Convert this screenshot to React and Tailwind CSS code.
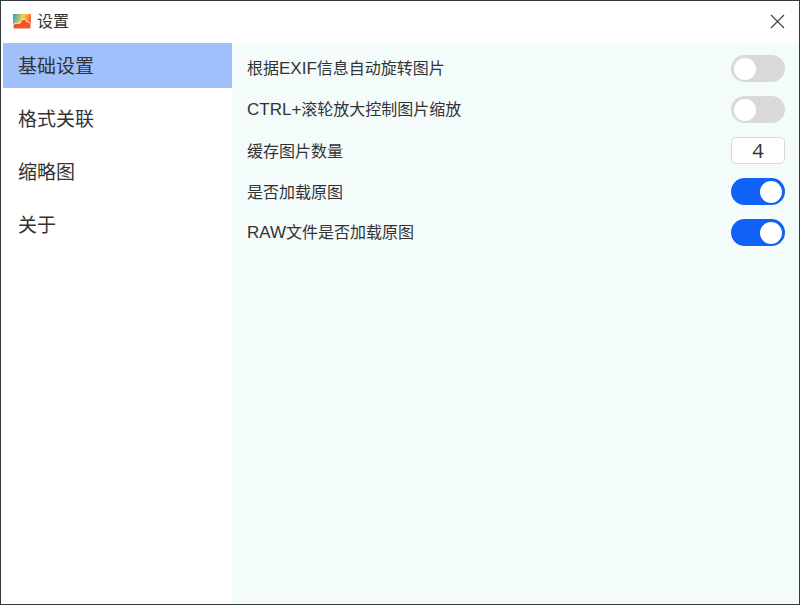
import React from 'react';

const menu = ['基础设置', '格式关联', '缩略图', '关于'];

const Latin = ({ children }) => (
    <span className="text-[17px] font-['Liberation_Sans',sans-serif]">{children}</span>
);

const Toggle = ({ on }) => (
    <div className={on
        ? 'w-[54px] h-[27px] rounded-full bg-[#0f62f5] flex items-center justify-end pr-[3px]'
        : 'w-[54px] h-[27px] rounded-full bg-[#d9d9d9] flex items-center justify-start pl-[3px]'}>
        <div className="w-[22px] h-[22px] rounded-full bg-white"></div>
    </div>
);

const Row = ({ label, children }) => (
    <div className="h-[41px] flex items-center justify-between">
        <span className="text-[16px] text-[#333333]">{label}</span>
        {children}
    </div>
);

const App = () => {
    return (
        <div className="w-[800px] h-[605px] bg-[#33393b] p-[1px] overflow-hidden font-['Open_Sans','Noto_Sans_CJK_SC',sans-serif]">
            <div className="w-full h-full bg-white flex flex-col">
                {/* title bar */}
                <div className="h-[42px] shrink-0 flex items-center pl-[12px] pr-[14px]">
                    <svg width="18" height="15" viewBox="0 0 18 15" className="mr-[6px] mb-[2px]">
                        <defs>
                            <linearGradient id="sky" x1="0" y1="0" x2="1" y2="0.3">
                                <stop offset="0" stopColor="#1f9fe0" />
                                <stop offset="0.55" stopColor="#f7d038" />
                                <stop offset="1" stopColor="#f2683a" />
                            </linearGradient>
                        </defs>
                        <rect width="18" height="15" fill="url(#sky)" />
                        <path d="M0 15V11C3 8 5 10 7 9C9 4 13 4 14 8C16 7 17 9 18 11V15Z" fill="#f0562e" stroke="#fff" strokeWidth="1" />
                    </svg>
                    <span className="text-[16px] leading-none text-[#333333] mb-[3px]">设置</span>
                    <svg width="15" height="15" viewBox="0 0 15 15" className="ml-auto mb-[2px]" fill="none" stroke="#444444" strokeWidth="1.2">
                        <path d="M1 1L14 14M14 1L1 14" />
                    </svg>
                </div>
                <div className="flex-1 flex">
                    {/* left menu */}
                    <div className="w-[231px] shrink-0 pl-[2px]">
                        {menu.map((item, i) => (
                            <div key={item} className={i === 0
                                ? 'h-[45px] mb-[8px] flex items-center pl-[15px] pt-[2px] bg-[#a0c0fc] text-[19px] text-[#333333]'
                                : 'h-[45px] mb-[8px] flex items-center pl-[15px] pt-[2px] text-[19px] text-[#333333]'}>
                                {item}
                            </div>
                        ))}
                    </div>
                    {/* settings */}
                    <div className="flex-1 bg-[#f4fbfb] pt-[5px] pl-[15px] pr-[14px]">
                        <Row label={<>根据<Latin>EXIF</Latin>信息自动旋转图片</>}><Toggle /></Row>
                        <Row label={<><Latin>CTRL+</Latin>滚轮放大控制图片缩放</>}><Toggle /></Row>
                        <Row label="缓存图片数量">
                            <div className="w-[54px] h-[27px] rounded-[5px] border border-[#d9d9d9] bg-white flex items-center justify-center text-[20px] text-[#333333]">4</div>
                        </Row>
                        <Row label="是否加载原图"><Toggle on /></Row>
                        <Row label={<><Latin>RAW</Latin>文件是否加载原图</>}><Toggle on /></Row>
                    </div>
                </div>
            </div>
        </div>
    );
};

export default App;
